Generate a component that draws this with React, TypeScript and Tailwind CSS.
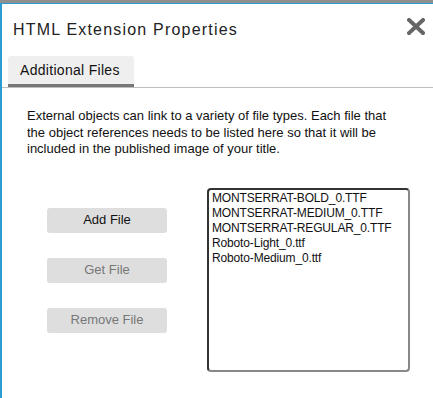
import React from "react";

export default function App() {
  const files = [
    "MONTSERRAT-BOLD_0.TTF",
    "MONTSERRAT-MEDIUM_0.TTF",
    "MONTSERRAT-REGULAR_0.TTF",
    "Roboto-Light_0.ttf",
    "Roboto-Medium_0.ttf",
  ];
  return (
    <div className="w-[433px] h-[398px] overflow-hidden bg-white relative" style={{ fontFamily: '"Liberation Sans", Arial, sans-serif' }}>
      <div className="h-[3px] bg-[#8f8f8f]" />
      <div className="h-[395px] border-t border-l-2 border-[#2a9bd3] flex flex-col">
        <div className="h-[52px] flex items-start justify-between">
          <div className="pt-[16px] pl-[11px] text-[16px] leading-[20px] text-[#222] tracking-[1.2px]">HTML Extension Properties</div>
          <svg className="mt-[14px] mr-[8px]" width="18" height="17" viewBox="0 0 18 17">
            <path d="M2 2 L16 15 M16 2 L2 15" stroke="#666" strokeWidth="4" strokeLinecap="square" />
          </svg>
        </div>
        <div className="border-b border-[#bdbdbd] pl-[6px] flex">
          <div className="w-[126px] h-[31px] bg-[#efefef] rounded-t-[3px] border-b-[3px] border-[#777] flex items-center pl-[12px] text-[14px] text-[#111] tracking-[0.3px]">
            Additional Files
          </div>
        </div>
        <div className="pl-[25px] w-[397px] pt-[20px] text-[13px] leading-[16.5px] text-[#111]">
          External objects can link to a variety of file types. Each file that the object references needs to be listed here so that it will be included in the published image of your title.
        </div>
        <div className="flex pt-[30px]">
          <div className="pl-[45px] pt-[20px] flex flex-col gap-[25px]">
            <div className="w-[120px] h-[25px] bg-[#dedede] rounded-[3px] flex items-center justify-center text-[13px] text-[#111]">Add File</div>
            <div className="w-[120px] h-[25px] bg-[#dedede] rounded-[3px] flex items-center justify-center text-[13px] text-[#777]">Get File</div>
            <div className="w-[120px] h-[25px] bg-[#dedede] rounded-[3px] flex items-center justify-center text-[13px] text-[#777]">Remove File</div>
          </div>
          <div className="ml-[40px] w-[203px] h-[184px] border-2 border-t-[#333] border-l-[#333] border-r-[#888] border-b-[#888] rounded-[4px] pl-[3px] pt-[1px] text-[12px] leading-[15px] text-[#111] tracking-[-0.15px]">
            {files.map((f) => (
              <div key={f}>{f}</div>
            ))}
          </div>
        </div>
      </div>
    </div>
  );
}
